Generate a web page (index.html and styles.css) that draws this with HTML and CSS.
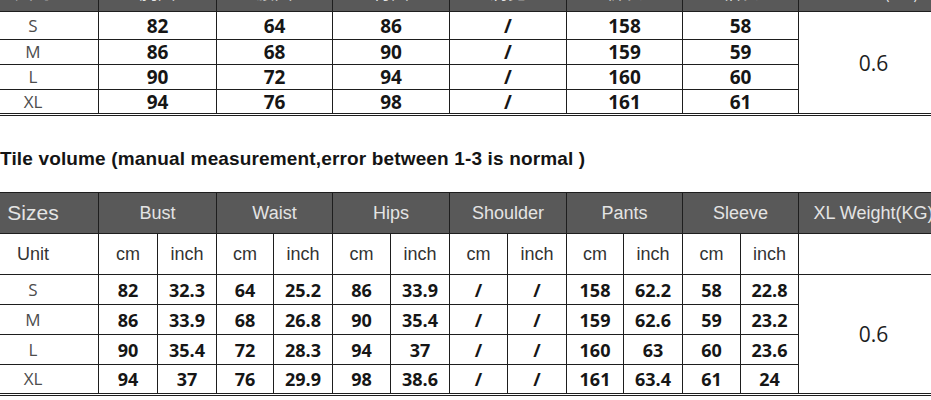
FILE: index.html
```html
<!DOCTYPE html>
<html lang="en">
<head>
<meta charset="utf-8">
<title>Size chart</title>
<link rel="stylesheet" href="styles.css">
</head>
<body>
<div class="page">
  <table class="chart chart-top">
    <colgroup>
      <col class="c-size"><col class="c-w118"><col class="c-w116"><col class="c-w117"><col class="c-w117"><col class="c-w116"><col class="c-w116"><col class="c-weight">
    </colgroup>
    <thead>
      <tr class="head-row">
        <th class="hd">尺码</th><th class="hd">胸围</th><th class="hd">腰围</th><th class="hd">臀围</th><th class="hd">肩宽</th><th class="hd">裤长</th><th class="hd">袖长</th><th class="hd">XL重量(KG)</th>
      </tr>
    </thead>
    <tbody>
      <tr class="row-top row-first"><td class="lbl">S</td><td class="num">82</td><td class="num">64</td><td class="num">86</td><td class="num">/</td><td class="num">158</td><td class="num">58</td><td class="weight" rowspan="4">0.6</td></tr>
      <tr class="row-top"><td class="lbl">M</td><td class="num">86</td><td class="num">68</td><td class="num">90</td><td class="num">/</td><td class="num">159</td><td class="num">59</td></tr>
      <tr class="row-top"><td class="lbl">L</td><td class="num">90</td><td class="num">72</td><td class="num">94</td><td class="num">/</td><td class="num">160</td><td class="num">60</td></tr>
      <tr class="row-top row-last"><td class="lbl">XL</td><td class="num">94</td><td class="num">76</td><td class="num">98</td><td class="num">/</td><td class="num">161</td><td class="num">61</td></tr>
    </tbody>
  </table>

  <p class="note">Tile volume (manual measurement,error between 1-3 is normal )</p>

  <table class="chart chart-main">
    <colgroup>
      <col class="c-size">
      <col class="c-59"><col class="c-59">
      <col class="c-57"><col class="c-59">
      <col class="c-58"><col class="c-59">
      <col class="c-58"><col class="c-59">
      <col class="c-57"><col class="c-59">
      <col class="c-58"><col class="c-58">
      <col class="c-weight">
    </colgroup>
    <thead>
      <tr class="head-row">
        <th class="hd hd-sizes">Sizes</th>
        <th class="hd" colspan="2">Bust</th>
        <th class="hd" colspan="2">Waist</th>
        <th class="hd" colspan="2">Hips</th>
        <th class="hd" colspan="2">Shoulder</th>
        <th class="hd" colspan="2">Pants</th>
        <th class="hd" colspan="2">Sleeve</th>
        <th class="hd hd-weight">XL Weight(KG)</th>
      </tr>
    </thead>
    <tbody>
      <tr class="unit-row">
        <td class="unit">Unit</td>
        <td class="unit">cm</td><td class="unit">inch</td>
        <td class="unit">cm</td><td class="unit">inch</td>
        <td class="unit">cm</td><td class="unit">inch</td>
        <td class="unit">cm</td><td class="unit">inch</td>
        <td class="unit">cm</td><td class="unit">inch</td>
        <td class="unit">cm</td><td class="unit">inch</td>
        <td class="unit unit-blank"></td>
      </tr>
      <tr class="row-main"><td class="lbl">S</td><td class="num">82</td><td class="num">32.3</td><td class="num">64</td><td class="num">25.2</td><td class="num">86</td><td class="num">33.9</td><td class="num">/</td><td class="num">/</td><td class="num">158</td><td class="num">62.2</td><td class="num">58</td><td class="num">22.8</td><td class="weight weight-main" rowspan="4">0.6</td></tr>
      <tr class="row-main"><td class="lbl">M</td><td class="num">86</td><td class="num">33.9</td><td class="num">68</td><td class="num">26.8</td><td class="num">90</td><td class="num">35.4</td><td class="num">/</td><td class="num">/</td><td class="num">159</td><td class="num">62.6</td><td class="num">59</td><td class="num">23.2</td></tr>
      <tr class="row-main"><td class="lbl">L</td><td class="num">90</td><td class="num">35.4</td><td class="num">72</td><td class="num">28.3</td><td class="num">94</td><td class="num">37</td><td class="num">/</td><td class="num">/</td><td class="num">160</td><td class="num">63</td><td class="num">60</td><td class="num">23.6</td></tr>
      <tr class="row-main row-last"><td class="lbl">XL</td><td class="num">94</td><td class="num">37</td><td class="num">76</td><td class="num">29.9</td><td class="num">98</td><td class="num">38.6</td><td class="num">/</td><td class="num">/</td><td class="num">161</td><td class="num">63.4</td><td class="num">61</td><td class="num">24</td></tr>
    </tbody>
  </table>
</div>
</body>
</html>
```

FILE: styles.css
```css
html, body {
  margin: 0;
  padding: 0;
  background: #ffffff;
  overflow: hidden;
}

.page {
  width: 931px;
  height: 400px;
  overflow: hidden;
  background: #ffffff;
}

.chart {
  width: 981px;
  margin-left: -33px;
  table-layout: fixed;
  border-collapse: collapse;
  border-spacing: 0;
}

.chart-top {
  margin-top: -30px;
}

.c-size { width: 131px; }
.c-w118 { width: 118px; }
.c-w116 { width: 116px; }
.c-w117 { width: 117px; }
.c-weight { width: 150px; }
.c-57 { width: 57px; }
.c-58 { width: 58px; }
.c-59 { width: 59px; }

.chart th,
.chart td {
  border: 1px solid #1e1e1e;
  padding: 0;
  text-align: center;
  vertical-align: middle;
  white-space: nowrap;
  overflow: hidden;
}

.head-row {
  height: 41px;
}

.hd {
  background: #595959;
  color: #e4e4e4;
  font-family: "Liberation Sans", Arial, "Noto Sans CJK SC", sans-serif;
  font-weight: 400;
  font-size: 18px;
  line-height: 20px;
}

.hd-sizes {
  font-size: 21px;
}

.hd-weight {
  text-align: left;
  padding-left: 14px;
}

.chart-top .hd {
  font-family: "Noto Sans CJK SC", "Liberation Sans", sans-serif;
  font-size: 18px;
  text-align: center;
  padding-left: 0;
}

.row-top {
  height: 25px;
}

.row-top.row-first {
  height: 28px;
}

.row-main {
  height: 30px;
}

.unit-row {
  height: 41px;
}

.unit {
  font-family: "Liberation Sans", Arial, sans-serif;
  font-size: 18px;
  color: #333333;
  line-height: 20px;
}

.unit-blank {
  border-bottom-color: #ffffff;
}

.lbl {
  font-family: "Open Sans", "Noto Sans", sans-serif;
  font-size: 17px;
  font-weight: 400;
  color: #4d4d4d;
  line-height: 20px;
}

.num {
  font-family: "Open Sans", "Noto Sans", sans-serif;
  font-weight: 700;
  color: #161616;
  font-size: 18px;
  line-height: 20px;
}

.chart-top .num {
  font-size: 19px;
}

.weight {
  font-family: "Open Sans", "Noto Sans", sans-serif;
  font-size: 21px;
  font-weight: 400;
  color: #1e1e1e;
}

.weight-main {
  border-top-color: #ffffff;
}

.row-last td {
  border-bottom: 3px double #1e1e1e;
}

.chart .weight {
  border-bottom: 3px double #1e1e1e;
}

.note {
  margin: 32px 0 0 0;
  padding: 0;
  height: 44px;
  font-family: "Liberation Sans", Arial, sans-serif;
  font-weight: 700;
  font-size: 19px;
  line-height: 22px;
  color: #141414;
  letter-spacing: 0.15px;
}
```
